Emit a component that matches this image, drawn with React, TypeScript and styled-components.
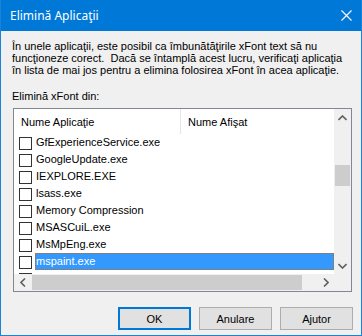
import React from "react";
import styled, { createGlobalStyle } from "styled-components";

const apps = [
  "GfExperienceService.exe",
  "GoogleUpdate.exe",
  "IEXPLORE.EXE",
  "lsass.exe",
  "Memory Compression",
  "MSASCuiL.exe",
  "MsMpEng.exe",
  "mspaint.exe",
];

const selected = "mspaint.exe";

const App = () => {
  return (
    <>
      <GlobalStyle />
      <Window>
        <TitleBar>
          <Title>Elimină Aplicaţii</Title>
          <CloseBtn>
            <svg width="11" height="11" viewBox="0 0 11 11">
              <path d="M0.5 0.5 L10.5 10.5 M10.5 0.5 L0.5 10.5" stroke="#fff" strokeWidth="1.1" />
            </svg>
          </CloseBtn>
        </TitleBar>
        <Body>
          <Description>
            În unele aplicaţii, este posibil ca îmbunătăţirile xFont text să nu
            <br />
            funcţioneze corect.&nbsp; Dacă se întamplă acest lucru, verificaţi aplicaţia
            <br />
            în lista de mai jos pentru a elimina folosirea xFont în acea aplicaţie.
          </Description>
          <Label>Elimină xFont din:</Label>
          <ListBox>
            <ListMain>
              <ListContent>
                <Header>
                  <HeaderCell width={167}>Nume Aplicaţie</HeaderCell>
                  <HeaderCell>Nume Afişat</HeaderCell>
                </Header>
                {apps.map((name) => (
                  <Row key={name}>
                    <Check />
                    <RowText active={name === selected}>{name}</RowText>
                  </Row>
                ))}
                {/* next row, only the checkbox edge peeks above the scrollbar */}
                <Row>
                  <Check />
                </Row>
              </ListContent>
              <VScroll>
                <ArrowBtn>
                  <svg width="9" height="6" viewBox="0 0 9 6">
                    <polyline points="0.5,5 4.5,1 8.5,5" fill="none" stroke="#606060" strokeWidth="1.6" />
                  </svg>
                </ArrowBtn>
                <VTrack>
                  <VThumb />
                </VTrack>
                <ArrowBtn>
                  <svg width="9" height="6" viewBox="0 0 9 6">
                    <polyline points="0.5,1 4.5,5 8.5,1" fill="none" stroke="#606060" strokeWidth="1.6" />
                  </svg>
                </ArrowBtn>
              </VScroll>
            </ListMain>
            <HScroll>
              <ArrowBtn>
                <svg width="6" height="9" viewBox="0 0 6 9">
                  <polyline points="5,0.5 1,4.5 5,8.5" fill="none" stroke="#606060" strokeWidth="1.6" />
                </svg>
              </ArrowBtn>
              <HTrack>
                <HThumb />
              </HTrack>
              <ArrowBtn>
                <svg width="6" height="9" viewBox="0 0 6 9">
                  <polyline points="1,0.5 5,4.5 1,8.5" fill="none" stroke="#606060" strokeWidth="1.6" />
                </svg>
              </ArrowBtn>
              <Corner />
            </HScroll>
          </ListBox>
          <Buttons>
            <Button primary>OK</Button>
            <Button>Anulare</Button>
            <Button>Ajutor</Button>
          </Buttons>
        </Body>
      </Window>
    </>
  );
};

const GlobalStyle = createGlobalStyle`
  body {
    margin: 0;
    background: #f0f0f0;
    font-family: "Liberation Sans", Arial, sans-serif;
  }
`;

const Window = styled.div`
  width: 362px;
  height: 336px;
  box-sizing: border-box;
  border: 1px solid #1883d7;
  border-top: none;
  background: #f0f0f0;
  display: flex;
  flex-direction: column;
  overflow: hidden;
`;

const TitleBar = styled.div`
  height: 31px;
  margin: 0 -1px;
  background: #0078d7;
  color: #fff;
  display: flex;
  align-items: center;
  justify-content: space-between;
  padding: 0 10px 0 10px;
  flex-shrink: 0;
`;

const Title = styled.div`
  font-family: "Noto Sans", "Liberation Sans", sans-serif;
  font-size: 12px;
`;

const CloseBtn = styled.div`
  display: flex;
  align-items: center;
  margin-top: -1px;
`;

const Body = styled.div`
  padding: 9px 8px 0 11px;
  font-size: 11px;
  color: #000;
`;

const Description = styled.div`
  line-height: 12px;
  white-space: nowrap;
`;

const Label = styled.div`
  margin-top: 14px;
  line-height: 12px;
`;

const ListBox = styled.div`
  margin-top: 6px;
  margin-left: 1px;
  width: 339px;
  height: 184px;
  box-sizing: border-box;
  border: 1px solid #828790;
  background: #fff;
  display: flex;
  flex-direction: column;
`;

const ListMain = styled.div`
  flex: 1;
  display: flex;
  min-height: 0;
`;

const ListContent = styled.div`
  flex: 1;
  overflow: hidden;
`;

const Header = styled.div`
  height: 25px;
  display: flex;
`;

const HeaderCell = styled.div<{ width?: number }>`
  width: ${(p) => (p.width ? `${p.width}px` : "auto")};
  flex: ${(p) => (p.width ? "none" : "1")};
  box-sizing: border-box;
  padding: 0 0 0 7px;
  display: flex;
  align-items: center;
  border-right: ${(p) => (p.width ? "1px solid #e5e5e5" : "none")};
`;

const Row = styled.div`
  height: 17px;
  display: flex;
  align-items: center;
  padding-left: 5px;
`;

const Check = styled.div`
  width: 13px;
  height: 13px;
  box-sizing: border-box;
  border: 1px solid #333;
  background: #fff;
  margin-top: 2px;
  flex-shrink: 0;
`;

const RowText = styled.div<{ active?: boolean }>`
  margin-left: 3px;
  height: 17px;
  line-height: 17px;
  padding-left: 1px;
  flex: 1;
  box-sizing: border-box;
  background: ${(p) => (p.active ? "#3399ff" : "transparent")};
  color: ${(p) => (p.active ? "#fff" : "#000")};
  outline: ${(p) => (p.active ? "1px dotted #cc6600" : "none")};
  outline-offset: -1px;
`;

const VScroll = styled.div`
  width: 17px;
  background: #f0f0f0;
  display: flex;
  flex-direction: column;
`;

const ArrowBtn = styled.div`
  width: 17px;
  height: 17px;
  flex-shrink: 0;
  display: flex;
  align-items: center;
  justify-content: center;
`;

const VTrack = styled.div`
  flex: 1;
  padding-top: 39px;
`;

const VThumb = styled.div`
  height: 21px;
  margin: 0 1px;
  background: #cdcdcd;
`;

const HScroll = styled.div`
  height: 17px;
  background: #f0f0f0;
  display: flex;
`;

const HTrack = styled.div`
  flex: 1;
  display: flex;
  align-items: center;
`;

const HThumb = styled.div`
  width: 270px;
  height: 15px;
  margin-left: 1px;
  background: #cdcdcd;
`;

const Corner = styled.div`
  width: 17px;
`;

const Buttons = styled.div`
  margin-top: 15px;
  display: flex;
  justify-content: flex-end;
  gap: 8px;
`;

const Button = styled.button<{ primary?: boolean }>`
  width: 73px;
  height: 23px;
  box-sizing: border-box;
  background: #e1e1e1;
  border: ${(p) => (p.primary ? "2px solid #0078d7" : "1px solid #adadad")};
  font-family: "Liberation Sans", Arial, sans-serif;
  font-size: 11px;
  color: #000;
  padding: 0;
`;

export default App;
